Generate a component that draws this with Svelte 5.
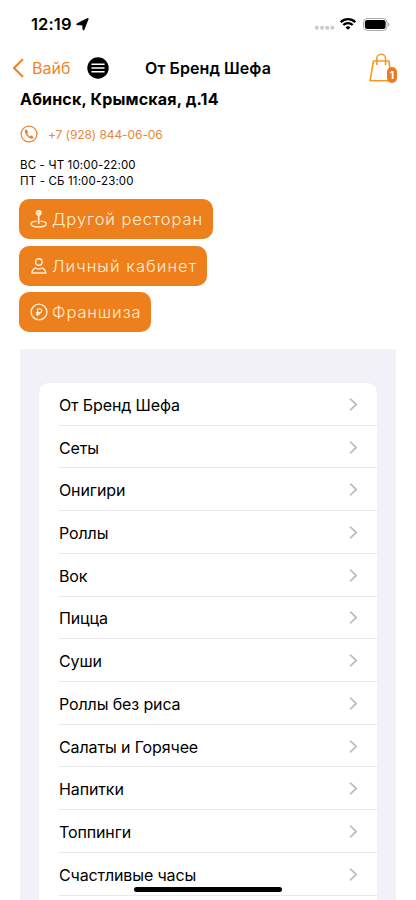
<script lang="ts">
  interface Action {
    icon: "place" | "user" | "ruble";
    label: string;
  }

  const actions: Action[] = [
    { icon: "place", label: "Другой ресторан" },
    { icon: "user", label: "Личный кабинет" },
    { icon: "ruble", label: "Франшиза" },
  ];

  const categories = [
    "От Бренд Шефа",
    "Сеты",
    "Онигири",
    "Роллы",
    "Вок",
    "Пицца",
    "Суши",
    "Роллы без риса",
    "Салаты и Горячее",
    "Напитки",
    "Топпинги",
    "Счастливые часы",
    "",
  ];

  let cartCount = $state(1);
</script>

<div class="screen">
  <div class="status-bar">
    <span class="time">12:19</span>
    <svg class="location" width="13" height="13" viewBox="0 0 13 13">
      <path d="M12.200.9 8 11.700c-.3.600-1 .5-1-.1L6.700 7 1.200 6.700C.5 6.600.4 6 1 5.700L11.600.4c.5-.2.800.100.6.5z" stroke="#000" stroke-width=".8" stroke-linejoin="round" />
    </svg>
    <svg class="signal" width="20" height="4" viewBox="0 0 20 4">
      <rect x="0" y="0" width="3.600" height="3.600" rx="1" />
      <rect x="5.200" y="0" width="3.600" height="3.600" rx="1" />
      <rect x="10.400" y="0" width="3.600" height="3.600" rx="1" />
      <rect x="15.600" y="0" width="3.600" height="3.600" rx="1" />
    </svg>
    <svg class="wifi" width="16" height="12" viewBox="0 0 16 12" fill="none" stroke="#000" stroke-width="2.300">
      <path d="M.8 4.200a10.200 10.200 0 0 1 14.400 0" />
      <path d="M3.300 7a6.600 6.600 0 0 1 9.400 0" />
      <path d="M8 11.800 5.500 9.400a3.600 3.600 0 0 1 5 0z" fill="#000" stroke="none" />
    </svg>
    <svg class="battery" width="27" height="13" viewBox="0 0 27 13">
      <rect x=".5" y=".5" width="23.500" height="12" rx="3.700" fill="none" stroke="#a8a8a8" />
      <rect x="1.900" y="1.900" width="20.700" height="9.200" rx="2.400" />
      <path d="M25.200 4.500v4c1.600-.7 1.600-3.300 0-4z" fill="#999" />
    </svg>
  </div>

  <header>
    <button class="back" aria-label="Вайб">
      <svg width="13" height="20" viewBox="0 0 13 20" fill="none" stroke="currentColor" stroke-width="2.200" stroke-linecap="round" stroke-linejoin="round">
        <path d="M10.300 1.800 2 10l8.300 8.200" />
      </svg>
      <span>Вайб</span>
    </button>
    <button class="menu" aria-label="Меню">
      <svg width="22" height="22" viewBox="0 0 22 22">
        <circle cx="11" cy="11" r="10.700" />
        <path d="M5 7.200h12M5 11h12M5 14.800h12" stroke="#fff" stroke-width="1.500" stroke-linecap="round" />
      </svg>
    </button>
    <h1>От Бренд Шефа</h1>
    <button class="cart" aria-label="Корзина">
      <svg width="24" height="30" viewBox="0 0 24 30" fill="none" stroke="#f59b22" stroke-width="1.600" stroke-linejoin="round" stroke-linecap="round">
        <path d="M4.500 8h15.400l2.700 19.800H1z" />
        <path d="M7.800 11.500V5.700a4.400 4.400 0 0 1 8.800 0v5.800" />
      </svg>
      <span class="badge">{cartCount}</span>
    </button>
  </header>

  <section class="restaurant">
    <h2>Абинск, Крымская, д.14</h2>
    <div class="phone">
      <svg width="18" height="18" viewBox="0 0 18 18">
        <circle cx="9" cy="9" r="7.900" fill="none" stroke="currentColor" stroke-width="1.300" />
        <path d="M5.600 4.600c-1 .7-1 2.200-.2 3.800 1.100 2.300 3 4.300 5.200 5.100 1.300.5 2.300.2 2.900-.7.300-.4.200-.7-.2-1l-1.700-1.200c-.4-.3-.7-.2-1 .1l-.6.7c-1.300-.6-2.300-1.700-2.800-3l.7-.5c.3-.3.4-.6.1-1l-1-2c-.3-.6-.9-.6-1.400-.3z" fill="currentColor" />
      </svg>
      <span>+7 (928) 844-06-06</span>
    </div>
    <div class="hours">
      <div>ВС - ЧТ 10:00-22:00</div>
      <div>ПТ - СБ 11:00-23:00</div>
    </div>
    <div class="actions">
      {#each actions as action}
        <button class="action {action.icon}">
          <svg width="18" height="18" viewBox="0 0 18 18" fill="none" stroke="currentColor" stroke-width="1.400" stroke-linecap="round" stroke-linejoin="round">
            {#if action.icon === "place"}
              <circle cx="8.700" cy="2.800" r="2.300" fill="currentColor" />
              <circle cx="8" cy="2.200" r=".6" fill="#ee7f1d" stroke="none" />
              <path d="M8.700 5.500v8" stroke-width="1.600" />
              <path d="M6.300 11.100c-3.200.3-5.200 1.300-5.200 2.700 0 1.900 3.200 3.200 7.500 3.200s7.600-1.300 7.600-3.200c0-1.400-2-2.400-5.200-2.700" />
            {:else if action.icon === "user"}
              <circle cx="8.800" cy="5" r="3.300" />
              <path d="M5.600 11c-2.200.6-3.400 2.400-3.800 5h14c-.4-2.600-1.600-4.400-3.800-5-2 1.200-4.400 1.200-6.400 0z" />
            {:else}
              <circle cx="9" cy="9" r="7.900" />
              <path d="M7.600 12.500V5.800h2.200a1.900 1.900 0 0 1 0 3.800H6.400M6.400 11.200h3.200" stroke-width="1.300" />
            {/if}
          </svg>
          <span>{action.label}</span>
        </button>
      {/each}
    </div>
  </section>

  <main>
    <ul>
      {#each categories as category}
        <li>
          <span>{category}</span>
          <svg width="9" height="14" viewBox="0 0 9 14" fill="none" stroke="#bfbfc2" stroke-width="1.800" stroke-linecap="round" stroke-linejoin="round">
            <path d="m1.600 1.200 5.600 5.300-5.600 5.300" />
          </svg>
        </li>
      {/each}
    </ul>
  </main>

  <div class="home-indicator"></div>
</div>

<style>
  :global(body) {
    margin: 0;
    background: #fff;
    font-family: Inter, "Liberation Sans", sans-serif;
  }

  .screen {
    position: relative;
    width: 416px;
    height: 900px;
    overflow: hidden;
    display: flex;
    flex-direction: column;
    box-sizing: border-box;
    background: #fff;
    color: #000;
  }

  button {
    border: none;
    background: none;
    padding: 0;
    font-family: inherit;
    cursor: pointer;
  }

  svg {
    display: block;
    flex-shrink: 0;
  }

  .status-bar {
    display: flex;
    align-items: center;
    height: 48px;
    padding: 0 26px 0 31px;
    box-sizing: border-box;
    flex-shrink: 0;
  }

  .time {
    width: 41px;
    font-size: 16.5px;
    font-weight: 600;
    letter-spacing: 0.1px;
    white-space: nowrap;
  }

  .location {
    margin-left: 4px;
  }

  .signal {
    margin-left: auto;
    margin-top: 8px;
    fill: #c8c8c8;
  }

  .wifi {
    margin-left: 5px;
    margin-right: 1px;
  }

  .battery {
    margin-left: 6px;
  }

  header {
    display: flex;
    align-items: center;
    height: 39px;
    padding: 0 18px 0 12px;
    box-sizing: border-box;
    flex-shrink: 0;
  }

  .back {
    display: flex;
    align-items: center;
    gap: 7px;
    width: 75px;
    color: #ef8429;
    font-size: 16px;
  }

  .menu {
    width: 22px;
  }

  h1 {
    margin: 0 0 0 36px;
    font-size: 16px;
    font-weight: 600;
    letter-spacing: 0.08px;
    line-height: 20px;
    white-space: nowrap;
  }

  .cart {
    position: relative;
    margin-left: auto;
    width: 29px;
    height: 30px;
  }

  .badge {
    position: absolute;
    right: 1px;
    bottom: 0;
    width: 10px;
    height: 16px;
    border-radius: 5px;
    background: #ec7a22;
    color: #fff;
    font-size: 10px;
    font-weight: 700;
    line-height: 16px;
    text-align: center;
  }

  .restaurant {
    height: 262px;
    padding: 2px 20px 0;
    box-sizing: border-box;
    flex-shrink: 0;
  }

  h2 {
    margin: 0;
    font-size: 16px;
    font-weight: 700;
    letter-spacing: 0.18px;
    line-height: 20px;
  }

  .phone {
    display: flex;
    align-items: center;
    gap: 10px;
    height: 18px;
    margin-top: 16px;
    color: #e5873b;
    font-size: 12px;
    letter-spacing: -0.08px;
  }

  .hours {
    margin-top: 14px;
    font-size: 11.5px;
    letter-spacing: 0.15px;
    line-height: 16px;
  }

  .actions {
    display: flex;
    flex-direction: column;
    align-items: flex-start;
    gap: 6.6px;
    margin: 10px 0 0 -1px;
  }

  .action {
    display: flex;
    align-items: center;
    gap: 4px;
    height: 40px;
    padding: 0 0 0 11px;
    border-radius: 10px;
    background: #ee7f1d;
    color: #ffeed2;
    font-size: 16.5px;
    font-weight: 300;
    white-space: nowrap;
  }

  .place {
    width: 194px;
    letter-spacing: 0.9px;
  }

  .user {
    width: 188px;
    letter-spacing: 1.05px;
  }

  .ruble {
    width: 132px;
    letter-spacing: 0.9px;
  }

  main {
    flex: 1;
    min-height: 0;
    margin: 0 20px;
    padding: 34px 19px 0;
    background: #f2f1f8;
    overflow: hidden;
  }

  ul {
    margin: 0;
    padding: 0 0 0 20px;
    list-style: none;
    background: #fff;
    border-radius: 10px;
  }

  li {
    display: flex;
    align-items: center;
    justify-content: space-between;
    height: 42.73px;
    padding: 2px 19px 0 0;
    box-sizing: border-box;
    border-bottom: 1px solid #e8e8ea;
    font-size: 16px;
    letter-spacing: -0.12px;
  }

  .home-indicator {
    position: absolute;
    left: 134px;
    bottom: 8px;
    width: 148px;
    height: 5px;
    border-radius: 3px;
    background: #000;
  }
</style>
